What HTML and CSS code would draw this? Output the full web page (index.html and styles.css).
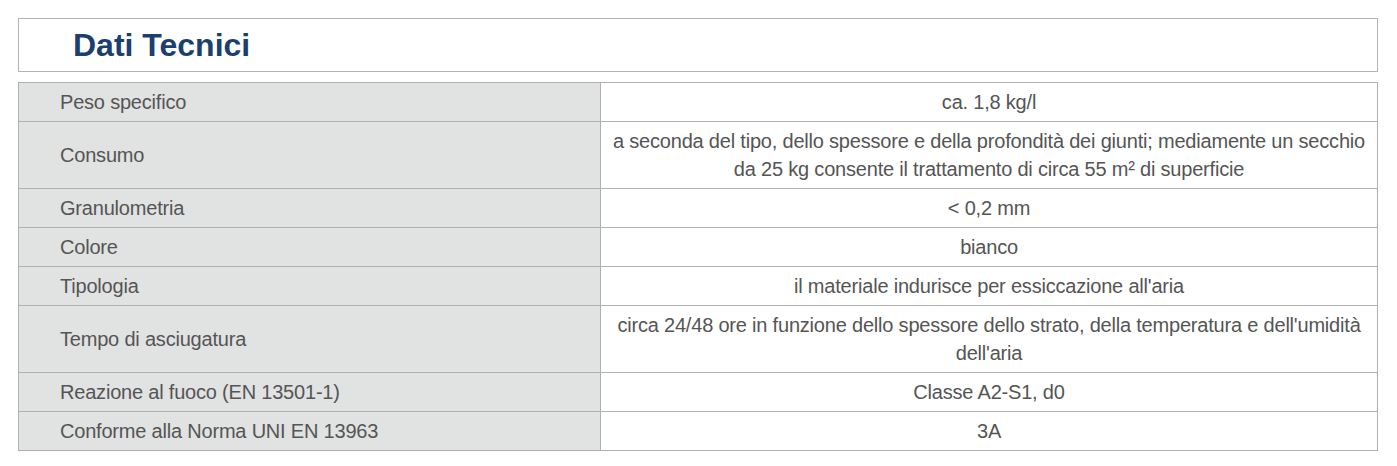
FILE: index.html
```html
<!DOCTYPE html>
<html lang="it">
<head>
<meta charset="utf-8">
<title>Dati Tecnici</title>
<link rel="stylesheet" href="styles.css">
</head>
<body>
<div class="sheet">
  <div class="heading"><h2 class="title">Dati Tecnici</h2></div>
  <table class="specs">
    <tr><th>Peso specifico</th><td>ca. 1,8 kg/l</td></tr>
    <tr><th>Consumo</th><td>a seconda del tipo, dello spessore e della profondità dei giunti; mediamente un secchio da 25 kg consente il trattamento di circa 55 m² di superficie</td></tr>
    <tr><th>Granulometria</th><td>&lt; 0,2 mm</td></tr>
    <tr><th>Colore</th><td>bianco</td></tr>
    <tr><th>Tipologia</th><td>il materiale indurisce per essiccazione all'aria</td></tr>
    <tr><th>Tempo di asciugatura</th><td>circa 24/48 ore in funzione dello spessore dello strato, della temperatura e dell'umidità dell'aria</td></tr>
    <tr><th>Reazione al fuoco (EN 13501-1)</th><td>Classe A2-S1, d0</td></tr>
    <tr><th>Conforme alla Norma UNI EN 13963</th><td>3A</td></tr>
  </table>
</div>
</body>
</html>
```
FILE: styles.css
```css
html, body {
  margin: 0;
  padding: 0;
  background: #ffffff;
}
body {
  padding: 18px 19px 0 18px;
  font-family: "Liberation Sans", Arial, sans-serif;
}
.sheet {
  width: 1360px;
}
.heading {
  box-sizing: border-box;
  height: 54px;
  border: 1px solid #b3b3b3;
  display: flex;
  align-items: center;
  padding-left: 54px;
}
.title {
  margin: 0;
  font-size: 32px;
  font-weight: bold;
  color: #1b3f6e;
  letter-spacing: 0;
}
.specs {
  margin-top: 10px;
  width: 100%;
  border-collapse: collapse;
  font-family: "Liberation Sans", Arial, sans-serif;
  font-size: 20px;
  letter-spacing: -0.2px;
  color: #555555;
}
.specs th, .specs td {
  border: 1px solid #b0b0b0;
  padding: 5px 8px;
  line-height: 28px;
  font-weight: normal;
}
.specs th {
  width: 532px;
  text-align: left;
  padding-left: 41px;
  background: #e1e2e2;
}
.specs td {
  text-align: center;
  background: #ffffff;
}
```
